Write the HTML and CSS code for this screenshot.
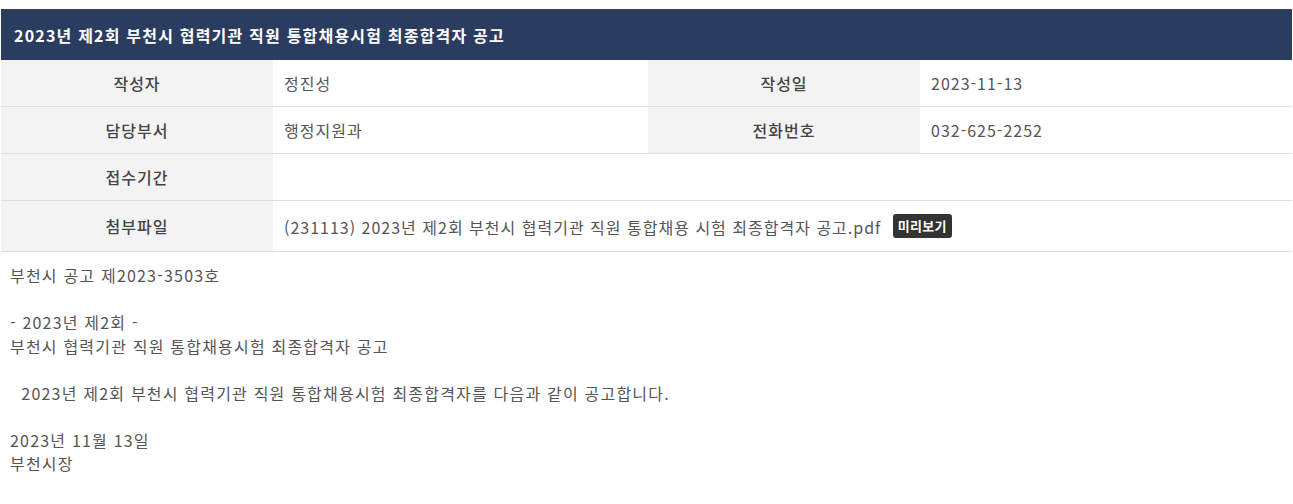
FILE: index.html
```html
<!DOCTYPE html>
<html lang="ko">
<head>
  <meta charset="UTF-8">
  <meta name="viewport" content="width=device-width, initial-scale=1.0">
  <title>게시판 상세보기</title>
  <link rel="stylesheet" href="styles.css">
</head>
<body>
  <div class="board-view">
    <h2 class="view-title">2023년 제2회 부천시 협력기관 직원 통합채용시험 최종합격자 공고</h2>

    <table class="view-info">
      <colgroup>
        <col class="col-th">
        <col class="col-td">
        <col class="col-th">
        <col>
      </colgroup>
      <tr>
        <th>작성자</th>
        <td>정진성</td>
        <th>작성일</th>
        <td>2023-11-13</td>
      </tr>
      <tr>
        <th>담당부서</th>
        <td>행정지원과</td>
        <th>전화번호</th>
        <td>032-625-2252</td>
      </tr>
      <tr>
        <th>접수기간</th>
        <td colspan="3"></td>
      </tr>
      <tr class="file-row">
        <th>첨부파일</th>
        <td colspan="3">
          <span class="file-name">(231113) 2023년 제2회 부천시 협력기관 직원 통합채용 시험 최종합격자 공고.pdf</span>
          <a href="#" class="btn-preview">미리보기</a>
        </td>
      </tr>
    </table>

    <div class="view-content">
      <p>부천시 공고 제2023-3503호</p>
      <p>&nbsp;</p>
      <p>- 2023년 제2회 -</p>
      <p>부천시 협력기관 직원 통합채용시험 최종합격자 공고</p>
      <p>&nbsp;</p>
      <p>&nbsp; 2023년 제2회 부천시 협력기관 직원 통합채용시험 최종합격자를 다음과 같이 공고합니다.</p>
      <p>&nbsp;</p>
      <p>2023년 11월 13일</p>
      <p>부천시장</p>
    </div>
  </div>
</body>
</html>
```

FILE: styles.css
```css
body {
  margin: 0;
  padding: 0;
  font-family: "Noto Sans CJK KR", "Noto Sans", sans-serif;
  color: #555;
  background: #fff;
}

.board-view {
  margin: 9px 1px 0;
}

.view-title {
  margin: 0;
  height: 50px;
  padding: 0 13px;
  border-top: 1px solid #444;
  background: #2b3c61;
  color: #fff;
  font-size: 16px;
  font-weight: bold;
  line-height: 50px;
  letter-spacing: 1.2px;
}

.view-info {
  width: 100%;
  border-collapse: collapse;
  table-layout: fixed;
  font-size: 16px;
  letter-spacing: 1px;
}

.col-th {
  width: 272px;
}

.col-td {
  width: 375px;
}

.view-info th,
.view-info td {
  height: 46px;
  padding: 0 11px;
  border-bottom: 1px solid #ddd;
  text-align: left;
  line-height: 20px;
}

.view-info th {
  background: #f3f3f3;
  color: #444;
  font-weight: 500;
  text-align: center;
}

.view-info td {
  color: #555;
}

.view-info .file-row th,
.view-info .file-row td {
  height: 50px;
}

.file-name {
  vertical-align: middle;
}

.btn-preview {
  display: inline-block;
  margin-left: 6px;
  padding: 0 5px;
  height: 24px;
  line-height: 24px;
  border-radius: 3px;
  background: #333;
  color: #fff;
  font-size: 13px;
  font-weight: bold;
  letter-spacing: 0.3px;
  text-decoration: none;
  vertical-align: middle;
}

.view-content {
  padding: 12px 9px;
  font-size: 16px;
  letter-spacing: 1.2px;
  color: #555;
}

.view-content p {
  margin: 0;
  line-height: 23.5px;
}
```
